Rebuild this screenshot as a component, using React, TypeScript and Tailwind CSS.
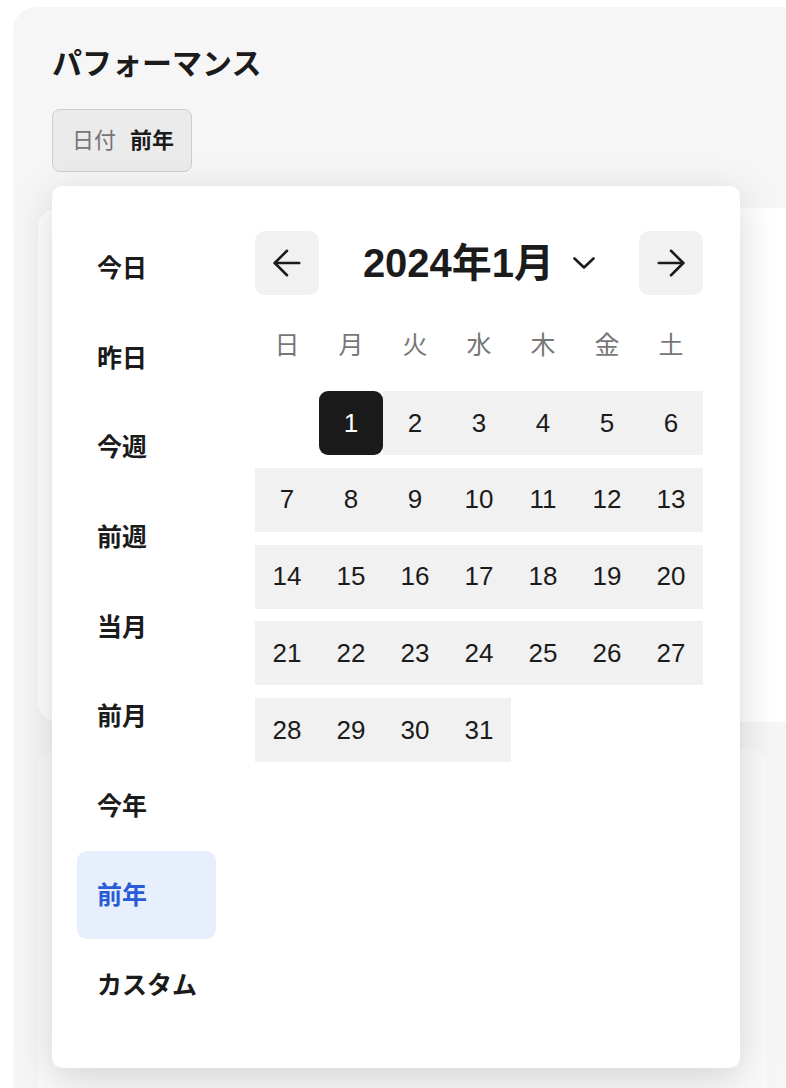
import { ArrowLeft, ArrowRight } from "lucide-react";

const presets = ["今日", "昨日", "今週", "前週", "当月", "前月", "今年", "前年", "カスタム"];
const weekdays = ["日", "月", "火", "水", "木", "金", "土"];

// January 2024 starts on Monday
const weeks: (number | null)[][] = [
  [null, 1, 2, 3, 4, 5, 6],
  [7, 8, 9, 10, 11, 12, 13],
  [14, 15, 16, 17, 18, 19, 20],
  [21, 22, 23, 24, 25, 26, 27],
  [28, 29, 30, 31, null, null, null],
];

function DayCell({ day }: { day: number | null }) {
  if (day === null) return <div className="h-16 w-16" />;
  if (day === 1) {
    return (
      <div className="flex h-16 w-16 items-center justify-center rounded-[9px] bg-[#1a1a1a] text-[26px] text-white">
        1
      </div>
    );
  }
  return (
    <div className="flex h-16 w-16 items-center justify-center bg-[#f1f1f1] text-[26px] text-[#1b1b1b]">
      {day}
    </div>
  );
}

export default function App() {
  return (
    <div
      className="relative h-[1088px] w-[786px] overflow-hidden bg-white"
      style={{ fontFamily: '"Liberation Sans", "Noto Sans CJK JP", sans-serif' }}
    >
      {/* page card */}
      <div className="ml-[13px] mt-[7px] h-[1120px] w-[820px] rounded-[24px] bg-[#f6f6f6] pl-[25px] pt-[38px]">
        <h1 className="ml-[14px] text-[30px] font-bold leading-[38px] text-[#1b1b1b]">パフォーマンス</h1>
        <button className="ml-[14px] mt-[26px] flex h-[63px] items-center gap-[14px] rounded-[8px] border border-[#cdcdcd] bg-[#ebebeb] pl-[19px] pr-[17px] text-[22px]">
          <span className="text-[#767676]">日付</span>
          <span className="font-bold text-[#1b1b1b]">前年</span>
        </button>

        <div className="mt-[36px] h-[514px] w-[790px] rounded-[20px] bg-white" />
        <div className="mt-[26px] h-[400px] w-[729px] rounded-[20px] bg-[#fafafa]" />
      </div>

      {/* date range popover */}
      <div className="absolute left-[52px] top-[186px] flex h-[882px] w-[688px] rounded-[10px] bg-white pl-[25px] shadow-[0_10px_40px_rgba(0,0,0,0.16)]">
        <div className="flex w-[139px] flex-col gap-[1.6px] pt-[38px]">
          {presets.map((p) => (
            <div
              key={p}
              className={
                p === "前年"
                  ? "flex h-[88px] items-center rounded-[10px] bg-[#e7eefc] pl-[20px] pt-[2px] text-[25px] font-bold text-[#2a5bd7]"
                  : "flex h-[88px] items-center pl-[20px] pt-[2px] text-[25px] font-bold text-[#1b1b1b]"
              }
            >
              {p}
            </div>
          ))}
        </div>

        <div className="ml-[39px] w-[448px] pt-[45px]">
          <div className="flex h-16 items-center">
            <button className="flex h-16 w-16 items-center justify-center rounded-[10px] bg-[#f1f1f1] text-[#1b1b1b]">
              <ArrowLeft size={42} strokeWidth={1.45} />
            </button>
            <div className="flex flex-1 items-center justify-center gap-[19px] text-[#1b1b1b]">
              <span className="text-[40px] font-bold leading-none">2024年1月</span>
              <svg width="22" height="12" viewBox="0 0 22 12" fill="none">
                <polyline
                  points="1.5,1.5 11,10.5 20.5,1.5"
                  stroke="#1b1b1b"
                  strokeWidth="2.6"
                  strokeLinecap="round"
                  strokeLinejoin="round"
                />
              </svg>
            </div>
            <button className="flex h-16 w-16 items-center justify-center rounded-[10px] bg-[#f1f1f1] text-[#1b1b1b]">
              <ArrowRight size={42} strokeWidth={1.45} />
            </button>
          </div>

          <div className="mt-[19px] grid h-16 grid-cols-7">
            {weekdays.map((w) => (
              <div key={w} className="flex items-center justify-center text-[25px] text-[#777777]">
                {w}
              </div>
            ))}
          </div>

          <div className="mt-[13px] flex flex-col gap-[12.75px]">
            {weeks.map((week, i) => (
              <div key={i} className="grid grid-cols-7">
                {week.map((d, j) => (
                  <DayCell key={j} day={d} />
                ))}
              </div>
            ))}
          </div>
        </div>
      </div>
    </div>
  );
}
